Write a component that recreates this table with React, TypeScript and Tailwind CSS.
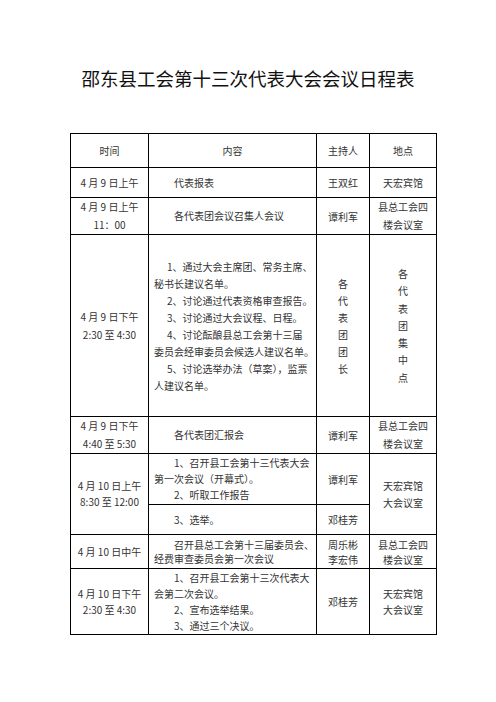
import React from 'react';

// 内容列：段落首行缩进，逐行给出以固定换行
function Cell({ paras, lh = 'leading-[16px]', indent = 'pl-[20px]' }: { paras: string[][]; lh?: string; indent?: string }) {
  return (
    <div className={`pl-[5px] pr-[2px] text-left ${lh}`}>
      {paras.map((p, i) => (
        <div key={i}>
          {p.map((l, j) => (
            <div key={j} className={`whitespace-nowrap ${j === 0 ? indent : ''}`}>{l}</div>
          ))}
        </div>
      ))}
    </div>
  );
}

function Lines({ items, lh = 'leading-[17px]' }: { items: string[]; lh?: string }) {
  return (
    <div className={`text-center ${lh}`}>
      {items.map((t, i) => (
        <div key={i} className="whitespace-nowrap">{t}</div>
      ))}
    </div>
  );
}

const td = 'border border-black p-0 align-middle';

export default function App() {
  return (
    <div className="w-[496px] h-[702px] bg-white font-['Noto_Sans_CJK_SC',sans-serif] text-[#333333]">
      <h1 className="pt-[68px] text-center text-[18.5px] leading-[20px] font-normal text-[#111111]">
        邵东县工会第十三次代表大会会议日程表
      </h1>

      <table className="mt-[45px] ml-[70px] w-[366px] table-fixed border-collapse text-[10px]">
        <colgroup>
          <col className="w-[78px]" />
          <col className="w-[168px]" />
          <col className="w-[53px]" />
          <col className="w-[67px]" />
        </colgroup>
        <tbody>
          <tr className="h-[34px]">
            <td className={td}><Lines items={['时间']} /></td>
            <td className={td}><Lines items={['内容']} /></td>
            <td className={td}><Lines items={['主持人']} /></td>
            <td className={td}><Lines items={['地点']} /></td>
          </tr>

          <tr className="h-[30px]">
            <td className={td}><Lines items={['4 月 9 日上午']} /></td>
            <td className={td}><Cell paras={[['代表报表']]} /></td>
            <td className={td}><Lines items={['王双红']} /></td>
            <td className={td}><Lines items={['天宏宾馆']} /></td>
          </tr>

          <tr className="h-[33px]">
            <td className={td}><Lines items={['4 月 9 日上午', '11：00']} lh="leading-[18px]" /></td>
            <td className={td}><Cell paras={[['各代表团会议召集人会议']]} /></td>
            <td className={td}><Lines items={['谭利军']} /></td>
            <td className={td}><Lines items={['县总工会四', '楼会议室']} lh="leading-[18px]" /></td>
          </tr>

          <tr className="h-[182px]">
            <td className={td}><Lines items={['4 月 9 日下午', '2:30 至 4:30']} lh="leading-[18px]" /></td>
            <td className={td}>
              <Cell
                lh="leading-[17px]"
                indent="pl-[13px]"
                paras={[
                  ['1、通过大会主席团、常务主席、', '秘书长建议名单。'],
                  ['2、讨论通过代表资格审查报告。'],
                  ['3、讨论通过大会议程、日程。'],
                  ['4、讨论酝酿县总工会第十三届', '委员会经审委员会候选人建议名单。'],
                  ['5、讨论选举办法（草案），监票', '人建议名单。'],
                ]}
              />
            </td>
            <td className={td}><Lines items={['各', '代', '表', '团', '团', '长']} /></td>
            <td className={td}><Lines items={['各', '代', '表', '团', '集', '中', '点']} lh="leading-[17.3px]" /></td>
          </tr>

          <tr className="h-[34px]">
            <td className={td}><Lines items={['4 月 9 日下午', '4:40 至 5:30']} lh="leading-[18px]" /></td>
            <td className={td}><Cell paras={[['各代表团汇报会']]} /></td>
            <td className={td}><Lines items={['谭利军']} /></td>
            <td className={td}><Lines items={['县总工会四', '楼会议室']} lh="leading-[18px]" /></td>
          </tr>

          <tr className="h-[51px]">
            <td className={td} rowSpan={2}><Lines items={['4 月 10 日上午', '8:30 至 12:00']} lh="leading-[16px]" /></td>
            <td className={td}>
              <Cell paras={[['1、召开县工会第十三代表大会', '第一次会议（开幕式）。'], ['2、听取工作报告']]} />
            </td>
            <td className={td}><Lines items={['谭利军']} /></td>
            <td className={td} rowSpan={2}><Lines items={['天宏宾馆', '大会议室']} /></td>
          </tr>
          <tr className="h-[30px]">
            <td className={td}><Cell paras={[['3、选举。']]} /></td>
            <td className={td}><Lines items={['邓桂芳']} /></td>
          </tr>

          <tr className="h-[34px]">
            <td className={td}><Lines items={['4 月 10 日中午']} /></td>
            <td className={td}>
              <Cell lh="leading-[14px]" paras={[['召开县总工会第十三届委员会、', '经费审查委员会第一次会议']]} />
            </td>
            <td className={td}><Lines items={['周乐彬', '李宏伟']} lh="leading-[15px]" /></td>
            <td className={td}><Lines items={['县总工会四', '楼会议室']} lh="leading-[15px]" /></td>
          </tr>

          <tr className="h-[66px]">
            <td className={td}><Lines items={['4 月 10 日下午', '2:30 至 4:30']} lh="leading-[16px]" /></td>
            <td className={td}>
              <Cell
                paras={[
                  ['1、召开县工会第十三次代表大', '会第二次会议。'],
                  ['2、宣布选举结果。'],
                  ['3、通过三个决议。'],
                ]}
              />
            </td>
            <td className={td}><Lines items={['邓桂芳']} /></td>
            <td className={td}><Lines items={['天宏宾馆', '大会议室']} lh="leading-[16px]" /></td>
          </tr>
        </tbody>
      </table>
    </div>
  );
}
